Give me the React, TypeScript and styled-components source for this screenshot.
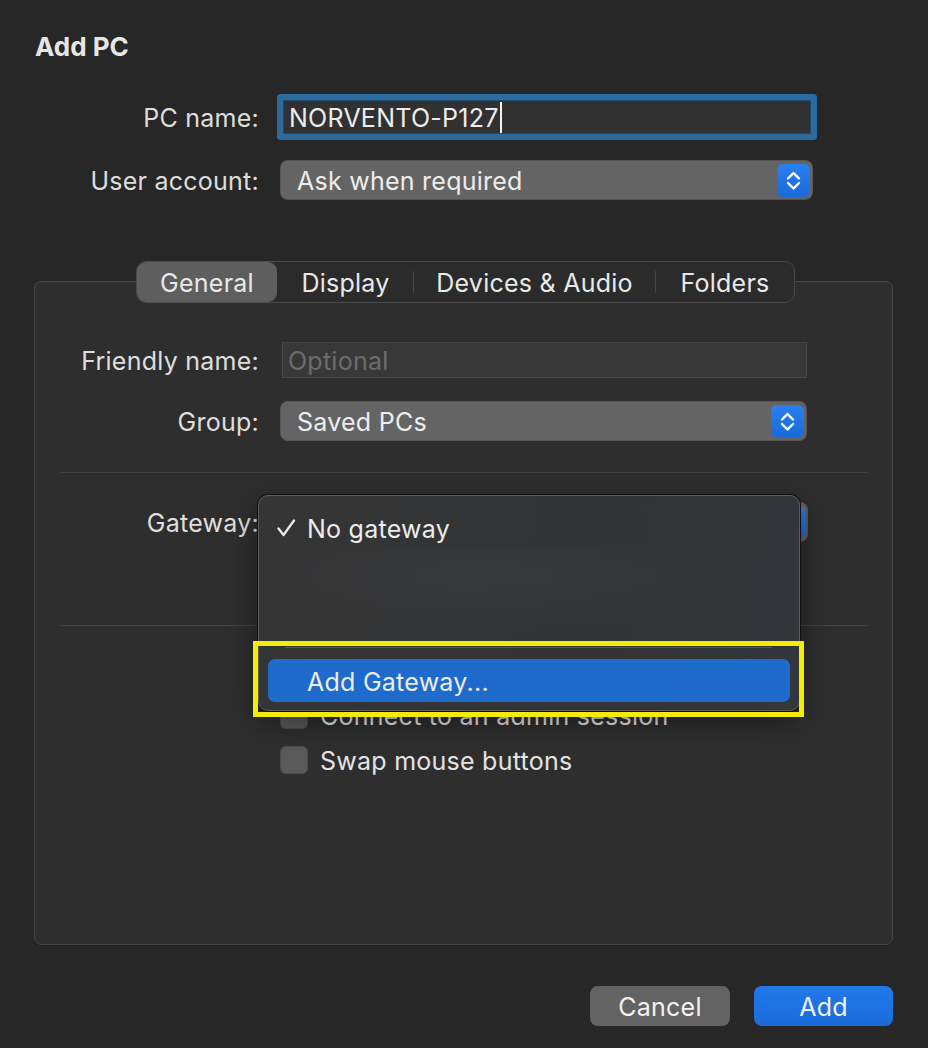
import React from "react";
import styled, { createGlobalStyle } from "styled-components";

const GlobalStyle = createGlobalStyle`
  html, body { margin: 0; padding: 0; background: #272727; }
  body { font-family: Inter, "Noto Sans", "Liberation Sans", sans-serif; -webkit-font-smoothing: antialiased; }
  * { box-sizing: border-box; }
`;

const Page = styled.div`
  width: 928px;
  height: 1048px;
  padding: 32px 35px 0 34px;
  display: flex;
  flex-direction: column;
  background: #272727;
  color: rgba(255, 255, 255, 0.86);
  font-size: 25px;
  letter-spacing: 0.25px;
  overflow: hidden;
`;

const Title = styled.h1`
  margin: 0 0 0 1px;
  font-size: 26px;
  line-height: 30px;
  font-weight: 700;
  letter-spacing: 0;
  color: #e6e6e6;
`;

const TopForm = styled.div`
  margin-top: 38px;
  display: flex;
  flex-direction: column;
  gap: 26px;
`;

const FieldRow = styled.div<{ $label: number }>`
  display: grid;
  grid-template-columns: ${(p) => p.$label}px auto;
  column-gap: 21px;
  align-items: center;
`;

const Label = styled.div`
  text-align: right;
  white-space: nowrap;
  line-height: 30px;
  padding-top: 1px;
`;

const Text = styled.span`
  padding-top: 2px;
`;

const TextField = styled.div<{ $w: number; $focus?: boolean; $inset?: number }>`
  width: ${(p) => p.$w}px;
  margin-left: ${(p) => p.$inset ?? 0}px;
  height: ${(p) => (p.$focus ? 34 : 36)}px;
  display: flex;
  align-items: center;
  padding: 0 5px;
  background: ${(p) => (p.$focus ? "#313131" : "#383838")};
  border: 1px solid ${(p) => (p.$focus ? "#1d4a70" : "#4a4a4a")};
  border-top-color: ${(p) => (p.$focus ? "#1d4a70" : "#444")};
  box-shadow: ${(p) => (p.$focus ? "0 0 0 6px #2b6b9d" : "none")};
  border-radius: ${(p) => (p.$focus ? "1px" : "0")};
  white-space: nowrap;
  color: #ececec;
`;

const Placeholder = styled.span`
  color: #6c6c6c;
  padding-top: 2px;
`;

const Caret = styled.span`
  display: inline-block;
  width: 2px;
  height: 31px;
  background: #f2f2f2;
  margin-left: 1px;
`;

const Popup = styled.div<{ $w: number }>`
  width: ${(p) => p.$w}px;
  height: 40px;
  display: flex;
  align-items: center;
  justify-content: space-between;
  padding: 0 3px 0 17px;
  background: #646464;
  border-radius: 8px;
  box-shadow: inset 0 0 0 1px rgba(0, 0, 0, 0.12);
  color: #ededed;
  white-space: nowrap;
`;

const Stepper = styled.div`
  width: 33px;
  height: 33px;
  border-radius: 6px;
  background: linear-gradient(#2a7ff0, #1a6ad8);
  display: flex;
  align-items: center;
  justify-content: center;
`;

const StepperIcon = () => (
  <Stepper>
    <svg width="33" height="33" viewBox="0 0 33 33" fill="none">
      <path d="M11 14.5 L16.5 9 L22 14.5" stroke="#fff" strokeWidth="2.4" strokeLinecap="round" strokeLinejoin="round" />
      <path d="M11 19 L16.5 24.5 L22 19" stroke="#fff" strokeWidth="2.4" strokeLinecap="round" strokeLinejoin="round" />
    </svg>
  </Stepper>
);

const Section = styled.div`
  margin-top: 61px;
  display: flex;
  flex-direction: column;
`;

const Tabs = styled.div`
  align-self: center;
  margin-left: 4px;
  margin-bottom: -22px;
  position: relative;
  z-index: 1;
  height: 42px;
  display: flex;
  align-items: center;
  background: #2b2b2b;
  border: 1px solid #4a4a4a;
  border-radius: 10px;
`;

const Tab = styled.div<{ $active?: boolean; $w: number }>`
  height: 40px;
  width: ${(p) => p.$w}px;
  display: flex;
  align-items: center;
  justify-content: center;
  border-radius: 9px;
  background: ${(p) => (p.$active ? "#5e5e5e" : "transparent")};
  color: #e9e9e9;
  white-space: nowrap;
`;

const TabSep = styled.div<{ $hidden?: boolean }>`
  width: 1px;
  height: 22px;
  background: ${(p) => (p.$hidden ? "transparent" : "#454545")};
`;

const Panel = styled.div`
  position: relative;
  height: 664px;
  padding: 60px 24px 0 25px;
  border: 1px solid #474747;
  border-radius: 7px;
  background: #2e2e2e;
  box-shadow: 0 1px 0 #1f1f1f;
  display: flex;
  flex-direction: column;
`;

const Separator = styled.div<{ $top: number }>`
  height: 1px;
  margin-top: ${(p) => p.$top}px;
  background: #424242;
`;

const Spaced = styled.div<{ $top: number }>`
  margin-top: ${(p) => p.$top}px;
`;

const CheckRow = styled.div<{ $top: number }>`
  margin-top: ${(p) => p.$top}px;
  padding-left: 220px;
  display: flex;
  align-items: center;
  gap: 12px;
  height: 28px;
  white-space: nowrap;
  color: #e3e3e3;
`;

const CheckBox = styled.div`
  width: 28px;
  height: 28px;
  flex: none;
  border-radius: 6px;
  background: #5a5a5a;
  box-shadow: inset 0 0 0 1px rgba(0, 0, 0, 0.15);
`;

const Menu = styled.div`
  position: absolute;
  left: 223px;
  top: 213px;
  width: 542px;
  height: 216px;
  padding: 10px 9px 8px;
  border-radius: 10px;
  background: linear-gradient(100deg, #353535 0%, #323436 60%, #33363a 100%);
  border: 1px solid #5c5c5c;
  box-shadow: 0 0 0 1px #111, 0 10px 30px rgba(0, 0, 0, 0.45);
  display: flex;
  flex-direction: column;
  z-index: 2;
`;

const MenuItem = styled.div<{ $active?: boolean }>`
  height: 43px;
  display: flex;
  align-items: center;
  padding-left: 9px;
  border-radius: 7px;
  background: ${(p) => (p.$active ? "#1f6bcc" : "transparent")};
  color: #ececec;
  white-space: nowrap;
`;

const CheckSlot = styled.span`
  width: 30px;
  flex: none;
  display: inline-flex;
  align-items: center;
`;

const BlurredArea = styled.div`
  height: 88px;
  border-radius: 6px;
  background: radial-gradient(ellipse at 45% 30%, rgba(70, 76, 84, 0.18), transparent 60%);
`;

const MenuDivider = styled.div`
  height: 1px;
  margin: 10px 18px 11px 17px;
  background: #575757;
`;

const Annotation = styled.div`
  position: absolute;
  left: 218px;
  top: 359px;
  width: 551px;
  height: 76px;
  border: 5px solid #f3ec0a;
  z-index: 3;
  pointer-events: none;
`;

const Buttons = styled.div`
  margin-top: 41px;
  display: flex;
  justify-content: flex-end;
  gap: 24px;
`;

const Button = styled.div<{ $primary?: boolean; $w: number }>`
  width: ${(p) => p.$w}px;
  height: 40px;
  border-radius: 8px;
  display: flex;
  align-items: center;
  justify-content: center;
  background: ${(p) => (p.$primary ? "linear-gradient(#2279ea, #1a6bd9)" : "#636363")};
  color: #f2f2f2;
`;

const Check = () => (
  <svg width="19" height="18" viewBox="0 0 19 18" fill="none">
    <path d="M1.5 9.5 L6.5 16 L17 1.5" stroke="#ececec" strokeWidth="2.3" strokeLinecap="round" strokeLinejoin="round" />
  </svg>
);

const tabs = [
  { label: "General", w: 140, active: true },
  { label: "Display", w: 135 },
  { label: "Devices & Audio", w: 241 },
  { label: "Folders", w: 138 },
];

export default function App() {
  return (
    <>
      <GlobalStyle />
      <Page>
        <Title>Add PC</Title>
        <TopForm>
          <FieldRow $label={225}>
            <Label>PC name:</Label>
            <TextField $w={528} $focus $inset={3}>
              <Text>NORVENTO-P127</Text>
              <Caret />
            </TextField>
          </FieldRow>
          <FieldRow $label={225}>
            <Label>User account:</Label>
            <Popup $w={533}>
              <Text>Ask when required</Text>
              <StepperIcon />
            </Popup>
          </FieldRow>
        </TopForm>

        <Section>
          <Tabs>
            {tabs.map((t, i) => (
              <React.Fragment key={t.label}>
                {i > 0 && <TabSep $hidden={tabs[i - 1].active || t.active} />}
                <Tab $active={t.active} $w={t.w}>
                  <Text>{t.label}</Text>
                </Tab>
              </React.Fragment>
            ))}
          </Tabs>
          <Panel>
            <FieldRow $label={199}>
              <Label>Friendly name:</Label>
              <TextField $w={525} $inset={2}>
                <Placeholder>Optional</Placeholder>
              </TextField>
            </FieldRow>
            <Spaced $top={23}>
              <FieldRow $label={199}>
                <Label>Group:</Label>
                <Popup $w={527}>
                  <Text>Saved PCs</Text>
                  <StepperIcon />
                </Popup>
              </FieldRow>
            </Spaced>
            <Separator $top={31} />
            <Spaced $top={29}>
              <FieldRow $label={199}>
                <Label>Gateway:</Label>
                <Popup $w={528}>
                  <span />
                  <StepperIcon />
                </Popup>
              </FieldRow>
            </Spaced>
            <CheckRow $top={22}>
              <CheckBox />
            </CheckRow>
            <Separator $top={33} />
            <CheckRow $top={30}>
              <CheckBox />
            </CheckRow>
            <CheckRow $top={17}>
              <CheckBox />
              <Text>Connect to an admin session</Text>
            </CheckRow>
            <CheckRow $top={17}>
              <CheckBox />
              <Text>Swap mouse buttons</Text>
            </CheckRow>

            <Menu>
              <MenuItem>
                <CheckSlot>
                  <Check />
                </CheckSlot>
                <Text>No gateway</Text>
              </MenuItem>
              <BlurredArea />
              <MenuDivider />
              <MenuItem $active>
                <CheckSlot />
                <Text>Add Gateway...</Text>
              </MenuItem>
            </Menu>
            <Annotation />
          </Panel>
        </Section>

        <Buttons>
          <Button $w={140}>
            <Text>Cancel</Text>
          </Button>
          <Button $w={139} $primary>
            <Text>Add</Text>
          </Button>
        </Buttons>
      </Page>
    </>
  );
}
